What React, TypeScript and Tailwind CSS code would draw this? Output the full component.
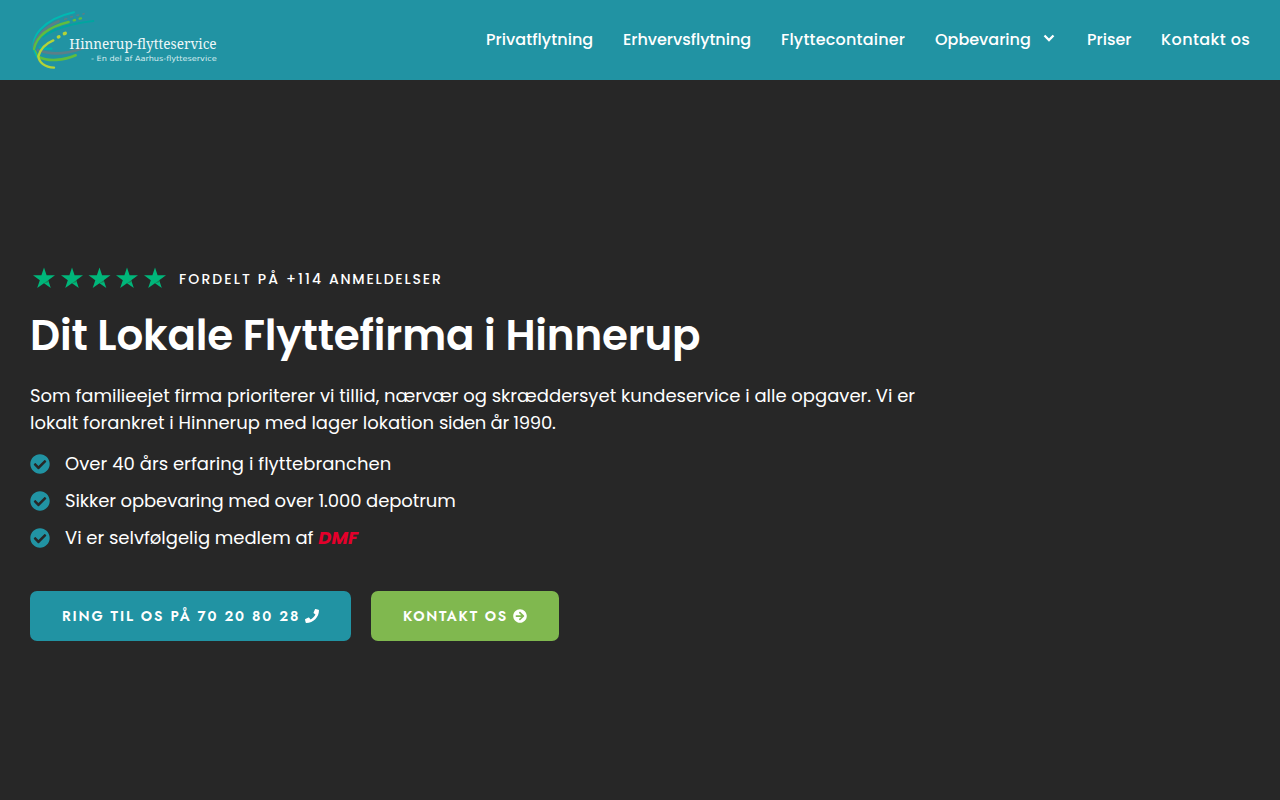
import type { ReactNode } from 'react';
import { FaArrowCircleRight, FaCheckCircle, FaPhone } from 'react-icons/fa';

const navItems = [
  { label: 'Privatflytning', style: 'w-[107px] tracking-[0.05px]' },
  { label: 'Erhvervsflytning', style: 'w-[128px] tracking-[-0.03px]' },
  { label: 'Flyttecontainer', style: 'w-[124px] tracking-[0.2px]' },
  { label: 'Opbevaring', style: 'w-[122px]', hasMenu: true },
  { label: 'Priser', style: 'w-[44px]' },
  { label: 'Kontakt os', style: 'w-[89px] tracking-[0.4px]' },
];

export default function App() {
  return (
    <div className="h-screen flex flex-col overflow-hidden bg-[#272727] text-white font-[Poppins,Inter,sans-serif]">
      {/* Header */}
      <header className="h-20 shrink-0 bg-[#2193a3] px-[30px] flex items-center justify-between">
        <Logo />
        <nav className="flex gap-[30px] text-base font-medium">
          {navItems.map((item) => (
            <a key={item.label} href="#" className={`${item.style} flex items-center justify-between whitespace-nowrap`}>
              <span>{item.label}</span>
              {item.hasMenu && (
                <svg className="w-3 h-2 mr-0.5 mb-1" viewBox="0 0 12 8" fill="none" stroke="currentColor" strokeWidth="2.3">
                  <path d="M1.5 1.5 6 6l4.500-4.500" />
                </svg>
              )}
            </a>
          ))}
        </nav>
      </header>

      {/* Hero */}
      <main className="px-[30px] pt-[185px]">
        <div className="flex items-center h-7">
          <Stars />
          <span className="ml-[9px] text-sm font-medium whitespace-nowrap">
            <span className="tracking-[2.1px]">FORDELT PÅ +114 </span>
            <span className="tracking-[1.8px]">ANMELDELSER</span>
          </span>
        </div>
        <h1 className="mt-[17px] text-[42px] leading-[52px] font-semibold tracking-[-0.18px] whitespace-nowrap">
          Dit Lokale Flyttefirma i Hinnerup
        </h1>
        <p className="mt-5 text-lg leading-[27px] whitespace-nowrap">
          <span className="tracking-[-0.01px]">
            Som familieejet firma prioriterer vi tillid, nærvær og skræddersyet kundeservice i alle opgaver. Vi er
          </span>
          <br />
          <span className="tracking-[-0.01px]">lokalt forankret i Hinnerup med lager lokation </span>
          <span className="tracking-[-0.3px]">siden år 1990.</span>
        </p>
        <ul className="mt-3.5 space-y-2.5 text-lg leading-[27px]">
          <CheckItem>
            <span className="tracking-[0.04px]">Over 40 års erfaring i flyttebranchen</span>
          </CheckItem>
          <CheckItem>
            <span className="tracking-[-0.1px]">Sikker opbevaring med over 1.000 depotrum</span>
          </CheckItem>
          <CheckItem>
            <span className="tracking-[-0.02px]">
              Vi er selvfølgelig medlem af <em className="font-bold text-[#e4002b]">DMF</em>
            </span>
          </CheckItem>
        </ul>
        <div className="mt-10 flex gap-5 font-[Jost,Lato,sans-serif] text-sm font-semibold">
          <a
            href="#"
            className="w-[321px] h-[50px] px-8 rounded-[7px] bg-[#2193a3] flex items-center justify-between tracking-[1.86px] whitespace-nowrap"
          >
            RING TIL OS PÅ 70 20 80 28 <FaPhone className="w-3.5 h-3.5 shrink-0" />
          </a>
          <a
            href="#"
            className="w-[188px] h-[50px] px-8 rounded-[7px] bg-[#80b84f] flex items-center justify-between tracking-[1.7px] whitespace-nowrap"
          >
            KONTAKT OS <FaArrowCircleRight className="w-3.5 h-3.5 shrink-0" />
          </a>
        </div>
      </main>
    </div>
  );
}

function CheckItem({ children }: { children: ReactNode }) {
  return (
    <li className="flex items-center gap-[15px] whitespace-nowrap">
      <FaCheckCircle className="w-5 h-5 text-[#2193a3]" />
      {children}
    </li>
  );
}

function Stars() {
  return (
    <svg className="w-[140px] h-7" viewBox="0 0 140 28">
      {[14, 42, 69.5, 97, 125].map((x) => (
        <g key={x} transform={`translate(${x} 13)`}>
          <path fill="#00b67a" d="M0-10.500 2.600-2.700H11L4.200 2.200 6.800 10 0 5.200-6.800 10-4.200 2.200-11-2.700h8.400z" />
          <path fill="#178053" d="m4.800 4-.6-1.800L0 5.200z" />
        </g>
      ))}
    </svg>
  );
}

function Logo() {
  return (
    <svg className="w-[190px] h-[62px] overflow-visible" viewBox="30 30 570 186" fill="none" strokeLinecap="round">
      <path d="M52 174C14 112 80 58 162 40" stroke="#00b9b2" strokeWidth="6" />
      <path d="M42 143C46 112 80 82 116 67" stroke="#5b7f88" strokeWidth="8" />
      <path d="M134 61l6-2M152 54l5-1M171 49l5-1M189 45l3-1" stroke="#5b7f88" strokeWidth="5" />
      <path d="M70 113C108 84 160 73 220 66" stroke="#00a5a0" strokeWidth="6" />
      <path d="M42 150C50 112 85 84 146 69" stroke="#5fbd3e" strokeWidth="7" />
      <path d="M161 64l4-1M179 59l4-1" stroke="#5fbd3e" strokeWidth="7" />
      <path d="M60 145C70 149 80 150 94 149" stroke="#00b1ac" strokeWidth="7" />
      <path d="M54 153C92 168 140 164 184 149" stroke="#5b7f88" strokeWidth="8" />
      <path d="M46 155l9 19" stroke="#5fbd3e" strokeWidth="4" />
      <path d="M56 174C84 188 132 185 167 169" stroke="#5fbd3e" strokeWidth="8" />
      <path d="M102 206C74 205 57 190 55 172 61 151 78 133 100 124" stroke="#b3d337" strokeWidth="7" />
      <path d="M115 114l2-1M133 104l3-1" stroke="#b3d337" strokeWidth="10" />
      <text x="148" y="150" textLength="442" lengthAdjust="spacingAndGlyphs" className="fill-[#edf7f8] text-[42px] font-['Noto_Serif','DejaVu_Serif',serif]">
        Hinnerup-flytteservice
      </text>
      <text x="213" y="185" textLength="377" lengthAdjust="spacingAndGlyphs" className="fill-[#d5ecef] text-[22px] font-['DejaVu_Sans',sans-serif]">
        - En del af Aarhus-flytteservice
      </text>
    </svg>
  );
}
